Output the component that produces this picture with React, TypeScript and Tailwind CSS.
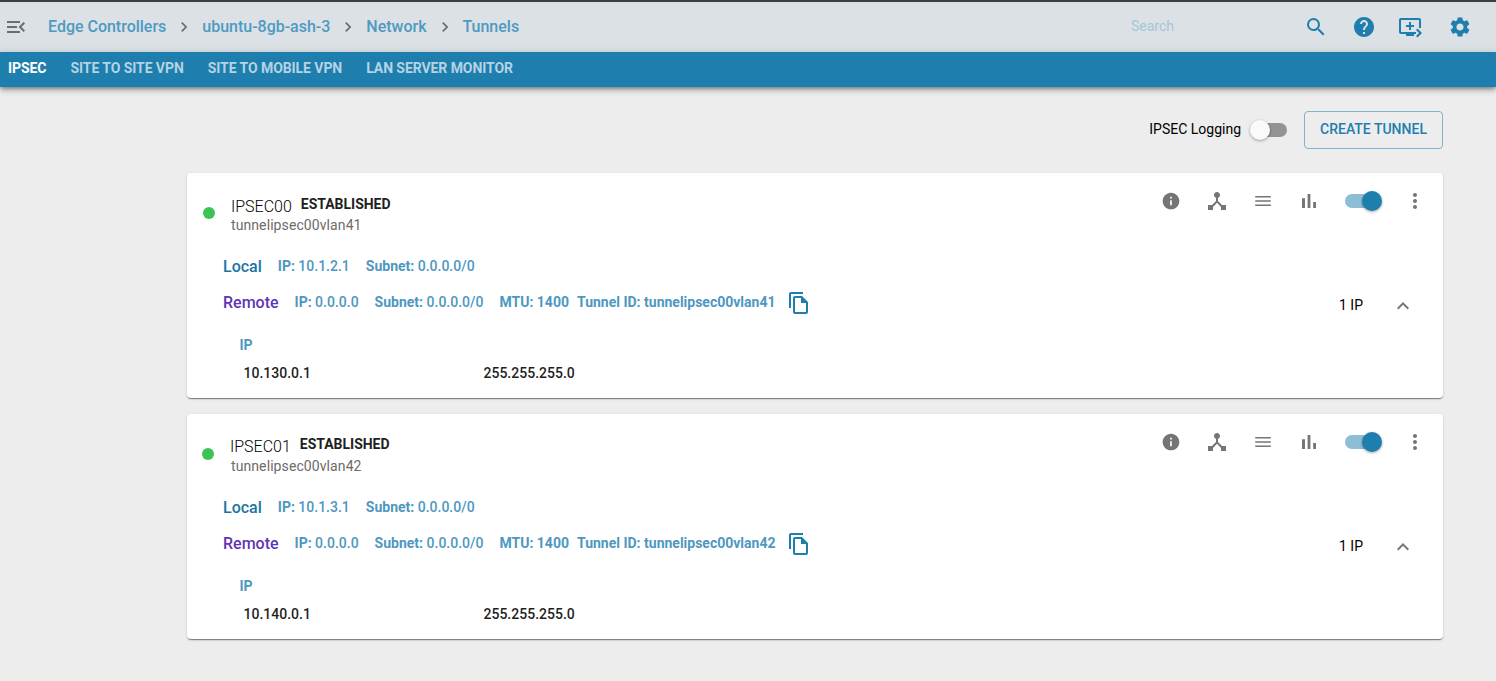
import React from "react";
import {
  MdMenuOpen,
  MdChevronRight,
  MdSearch,
  MdHelp,
  MdQueuePlayNext,
  MdSettings,
  MdInfo,
  MdDeviceHub,
  MdMoreVert,
  MdExpandLess,
  MdOutlineFileCopy,
} from "react-icons/md";

const crumbs = ["Edge Controllers", "ubuntu-8gb-ash-3", "Network", "Tunnels"];
const tabs = ["IPSEC", "SITE TO SITE VPN", "SITE TO MOBILE VPN", "LAN SERVER MONITOR"];

type Tunnel = {
  name: string;
  tunnelId: string;
  localIp: string;
  routeIp: string;
  dotClass: string;
  titleClass: string;
  idClass: string;
};

const tunnels: Tunnel[] = [
  {
    name: "IPSEC00",
    tunnelId: "tunnelipsec00vlan41",
    localIp: "10.1.2.1",
    routeIp: "10.130.0.1",
    dotClass: "ml-4",
    titleClass: "pl-4 pt-[21px]",
    idClass: "-mt-0.5",
  },
  {
    name: "IPSEC01",
    tunnelId: "tunnelipsec00vlan42",
    localIp: "10.1.3.1",
    routeIp: "10.140.0.1",
    dotClass: "ml-[15px]",
    titleClass: "pl-4 pt-5",
    idClass: "-mt-px ml-px",
  },
];

function Header() {
  return (
    <header className="flex h-[52px] items-center border-t-2 border-[#3f3d3e] bg-[#dce1e5] pl-1 pr-6 text-[#1e7ead]">
      <MdMenuOpen size={24} className="text-[#6b6d6f]" />
      <nav className="ml-5 flex items-center text-base font-medium leading-6 tracking-[-0.01px] text-[#4e9ac1]">
        {crumbs.map((c, i) => (
          <React.Fragment key={c}>
            {i > 0 && <MdChevronRight size={20} className="mx-2 text-[#6b6d6f]" />}
            <span className="whitespace-nowrap">{c}</span>
          </React.Fragment>
        ))}
      </nav>
      <span className="mb-0.5 ml-auto w-[173px] text-sm text-[#a3c6d9]">Search</span>
      <MdSearch size={24} />
      <MdHelp size={24} className="ml-6" />
      <MdQueuePlayNext size={24} className="ml-[22px]" />
      <MdSettings size={24} className="ml-[26px]" />
    </header>
  );
}

function TabBar() {
  return (
    <nav className="relative flex h-[35px] gap-6 bg-[#1e7ead] pl-2 text-sm font-bold leading-[33px] tracking-[-0.07px] text-[#b4d3e3] shadow-[0_2px_4px_-1px_rgba(0,0,0,0.4),0_4px_5px_0_rgba(0,0,0,0.14),0_1px_10px_0_rgba(0,0,0,0.12)]">
      {tabs.map((t, i) => (
        <span key={t} className={i === 0 ? "text-white" : ""}>
          {t}
        </span>
      ))}
    </nav>
  );
}

function Toggle({ on }: { on?: boolean }) {
  return (
    <span
      className={`flex h-[14px] w-9 items-center rounded-full ${
        on ? "justify-end bg-[#8ebed6]" : "justify-start bg-[#939393]"
      }`}
    >
      <span
        className={`size-5 shrink-0 rounded-full shadow-[0_1px_3px_rgba(0,0,0,0.35)] ${
          on ? "-mr-px bg-[#1e7ead]" : "-ml-px bg-[#fafafa]"
        }`}
      />
    </span>
  );
}

function LinesIcon({ className }: { className?: string }) {
  return (
    <svg width="16" height="24" viewBox="0 0 16 24" fill="currentColor" className={className}>
      <path d="M.2 7h15.6v1.6H.2zM.2 11.2h15.6v1.6H.2zM.2 15.4h15.6V17H.2z" />
    </svg>
  );
}

function BarsIcon({ className }: { className?: string }) {
  return (
    <svg width="24" height="24" viewBox="0 0 24 24" fill="currentColor" className={className}>
      <path d="M5 9.2h3V19H5zM10.6 5h2.8v14h-2.8zm5.6 8H19v6h-2.8z" />
    </svg>
  );
}

function Field({ label, value }: { label: string; value: string }) {
  return (
    <span className="mr-4">
      <b className="font-bold">{label}</b> {value}
    </span>
  );
}

function TunnelCard({ t }: { t: Tunnel }) {
  return (
    <section className="h-[225px] rounded bg-white text-sm font-medium text-[#1f1f1f] shadow-[0_2px_1px_-1px_rgba(0,0,0,0.3),0_1px_1px_0_rgba(0,0,0,0.2),0_1px_3px_0_rgba(0,0,0,0.12)]">
      <div className="flex h-[75px] items-start">
        <span className={`mt-[34px] size-3 rounded-full bg-[#3cc352] ${t.dotClass}`} />
        <div className={t.titleClass}>
          <div className="flex items-start leading-5">
            <span className="mt-[3px] text-base font-light leading-5 text-black">{t.name}</span>
            <span className="ml-[9px] font-bold tracking-[-0.02px]">ESTABLISHED</span>
          </div>
          <div className={`font-normal leading-5 tracking-[0.09px] text-[#6b6b6b] ${t.idClass}`}>
            {t.tunnelId}
          </div>
        </div>
        <div className="ml-auto mt-4 flex h-6 items-center text-[#757575]">
          <MdInfo size={20} />
          <MdDeviceHub size={24} className="ml-6" />
          <LinesIcon className="mx-[26px]" />
          <BarsIcon className="mr-6" />
          <Toggle on />
          <MdMoreVert size={24} className="ml-[22px] mr-4" />
        </div>
      </div>
      <div className="flex h-9 items-center pl-9 text-[#4e97bf]">
        <span className="mr-4 pt-0.5 text-base text-[#1b75a2]">Local</span>
        <Field label="IP:" value={t.localIp} />
        <Field label="Subnet:" value="0.0.0.0/0" />
      </div>
      <div className="flex h-9 items-center pl-9 text-[#4e97bf]">
        <span className="mr-4 pt-0.5 text-base text-[#5f35b5]">Remote</span>
        <Field label="IP:" value="0.0.0.0" />
        <Field label="Subnet:" value="0.0.0.0/0" />
        <span className="mr-2 font-bold">MTU: 1400</span>
        <span className="font-bold">Tunnel ID: {t.tunnelId}</span>
        <MdOutlineFileCopy size={24} className="ml-3 mt-0.5 text-[#1e7ead]" />
        <span className="ml-auto mt-1.5 font-normal text-black">1 IP</span>
        <MdExpandLess size={24} className="ml-7 mr-7 mt-2 text-[#757575]" />
      </div>
      <div className="pl-[52.5px] pt-[15px] font-bold leading-5 text-[#4e97bf]">IP</div>
      <div className="flex pl-[56.5px] pt-2 leading-5 text-[#1f1f1f]">
        <span className="w-[240px]">{t.routeIp}</span>
        <span>255.255.255.0</span>
      </div>
    </section>
  );
}

export default function App() {
  return (
    <div className="h-[681px] w-[1496px] overflow-hidden bg-[#ededed] font-['Roboto',sans-serif]">
      <Header />
      <TabBar />
      <main className="pl-[187px] pr-[53px] pt-6">
        <div className="flex h-[38px] items-center justify-end">
          <span className="mb-0.5 mr-[10px] text-sm text-black">IPSEC Logging</span>
          <Toggle />
          <button className="ml-[17px] h-[38px] w-[139px] rounded border border-[#7fb4cf] pb-0.5 text-sm font-medium text-[#1e7ead]">
            CREATE TUNNEL
          </button>
        </div>
        <div className="mt-6 flex flex-col gap-4">
          {tunnels.map((t) => (
            <TunnelCard key={t.name} t={t} />
          ))}
        </div>
      </main>
    </div>
  );
}
